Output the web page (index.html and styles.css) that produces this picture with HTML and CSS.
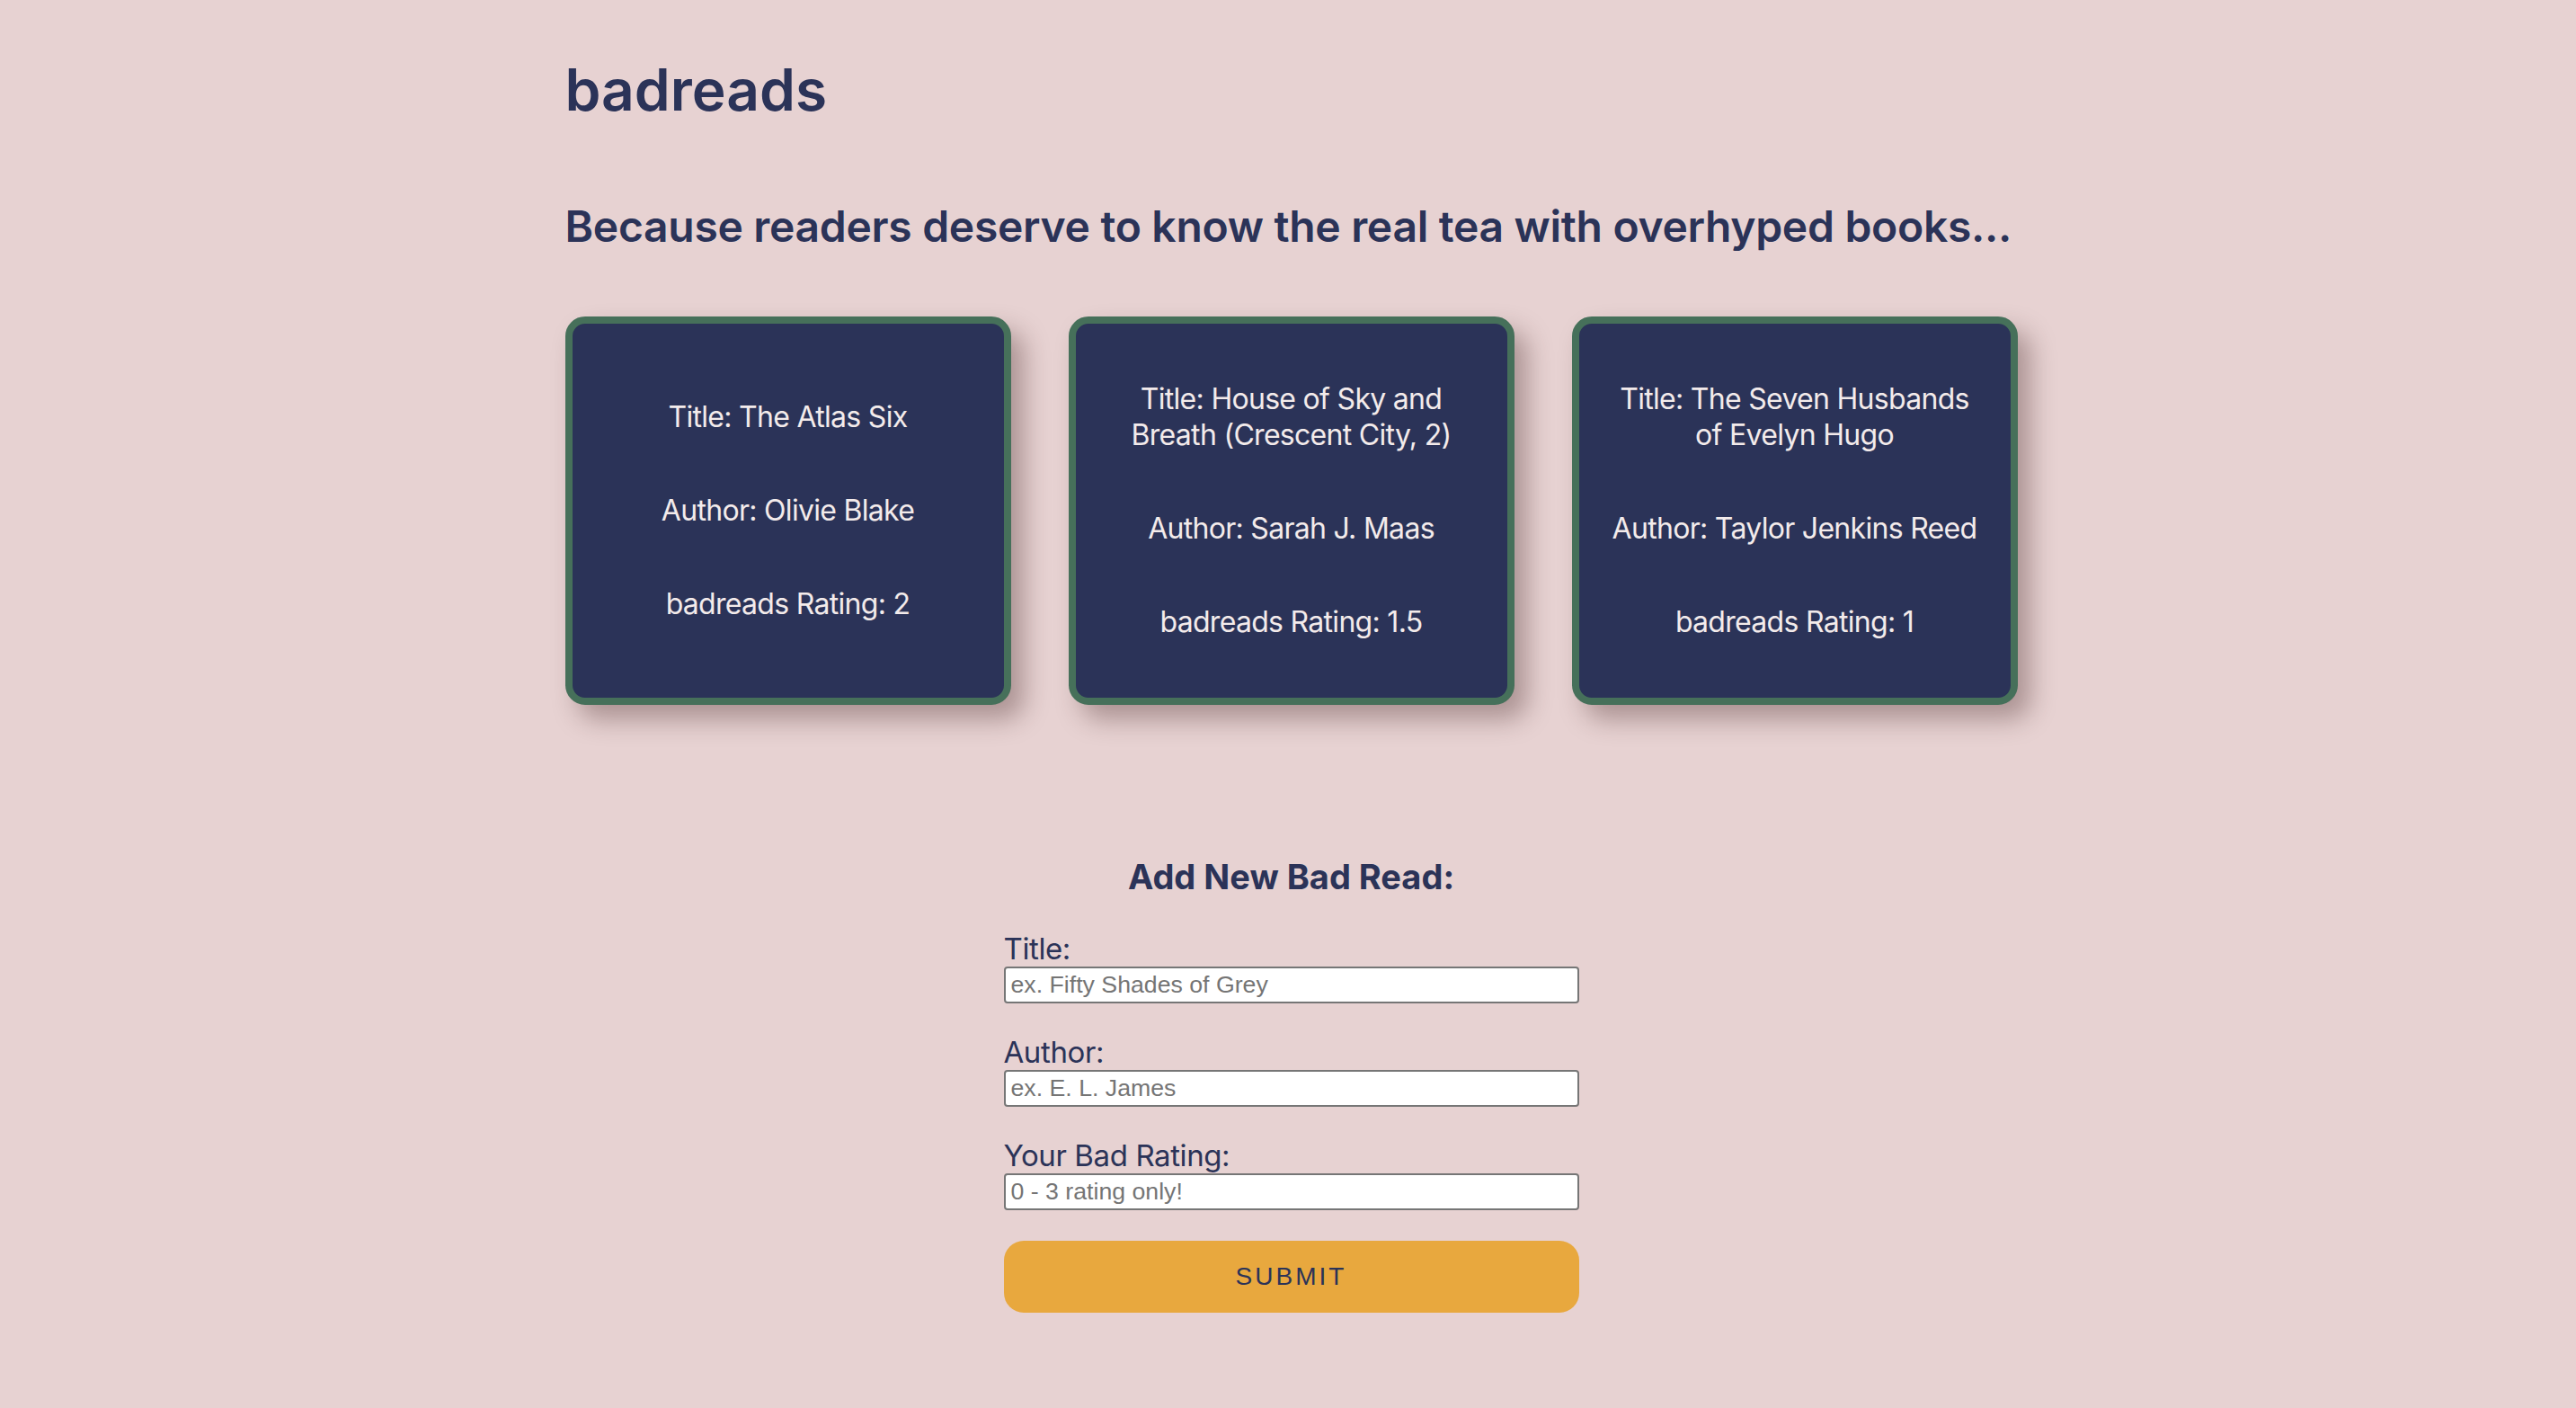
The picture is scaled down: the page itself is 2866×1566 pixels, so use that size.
FILE: index.html
```html
<!DOCTYPE html>
<html lang="en">
<head>
<meta charset="utf-8">
<title>badreads</title>
<link rel="stylesheet" href="styles.css">
</head>
<body>
<main class="page">
  <h1 class="brand">badreads</h1>
  <h2 class="tagline">Because readers deserve to know the real tea with overhyped books...</h2>
  <section class="cards">
    <article class="card">
      <p>Title: The Atlas Six</p>
      <p>Author: Olivie Blake</p>
      <p>badreads Rating: 2</p>
    </article>
    <article class="card">
      <p>Title: House of Sky and Breath (Crescent City, 2)</p>
      <p>Author: Sarah J. Maas</p>
      <p>badreads Rating: 1.5</p>
    </article>
    <article class="card">
      <p>Title: The Seven Husbands of Evelyn Hugo</p>
      <p>Author: Taylor Jenkins Reed</p>
      <p>badreads Rating: 1</p>
    </article>
  </section>
  <form class="add-form">
    <h3 class="form-title">Add New Bad Read:</h3>
    <label class="field"><span class="field-label">Title:</span><input class="field-input" type="text" placeholder="ex. Fifty Shades of Grey"></label>
    <label class="field"><span class="field-label">Author:</span><input class="field-input" type="text" placeholder="ex. E. L. James"></label>
    <label class="field"><span class="field-label">Your Bad Rating:</span><input class="field-input" type="text" placeholder="0 - 3 rating only!"></label>
    <button class="submit" type="button">Submit</button>
  </form>
</main>
</body>
</html>
```
FILE: styles.css
```css
* { box-sizing: border-box; }

body {
  margin: 0;
  background: #e7d2d2;
  color: #2b3358;
  font-family: Inter, "Noto Sans", sans-serif;
}

.page {
  width: 1623px;
  margin: 0 auto;
  padding: 61px 0 100px 7px;
}

.brand {
  margin: 0;
  font-size: 64px;
  line-height: 78px;
  font-weight: 600;
  letter-spacing: 0;
}

.tagline {
  margin: 84px 0 0;
  font-size: 48px;
  line-height: 58px;
  font-weight: 600;
  letter-spacing: -0.3px;
  white-space: nowrap;
}

.cards {
  margin-top: 71px;
  display: flex;
  gap: 64px;
}

.card {
  width: 496px;
  height: 432px;
  background: #2b3358;
  border: 8px solid #46705a;
  border-radius: 22px;
  box-shadow: 14px 16px 28px rgba(60, 30, 30, 0.35);
  padding: 0 30px;
  display: flex;
  flex-direction: column;
  justify-content: center;
  gap: 64px;
  text-align: center;
  color: #f3ebeb;
}

.card p {
  margin: 0;
  font-size: 32px;
  line-height: 40px;
  font-weight: 400;
  letter-spacing: -0.7px;
}

.add-form {
  width: 640px;
  margin: 168px auto 0;
  display: flex;
  flex-direction: column;
}

.form-title {
  margin: 0 0 37px;
  text-align: center;
  font-size: 38px;
  line-height: 46px;
  font-weight: 700;
}

.field {
  display: flex;
  flex-direction: column;
  margin-bottom: 34px;
}

.field-label {
  font-size: 33px;
  line-height: 40px;
  letter-spacing: -0.4px;
}

.field-input {
  width: 640px;
  height: 41px;
  margin: 0;
  border: 2px solid #767676;
  border-radius: 4px;
  padding: 0 6px;
  font-family: "Liberation Sans", Arial, sans-serif;
  font-size: 26.7px;
  background: #fff;
  color: #222;
}

.field-input::placeholder {
  color: #757575;
}

.submit {
  margin-top: 0;
  height: 80px;
  width: 640px;
  border: none;
  border-radius: 22px;
  background: #e8a83e;
  color: #2b3358;
  font-family: "Liberation Sans", Arial, sans-serif;
  font-size: 28px;
  letter-spacing: 3px;
  text-transform: uppercase;
}
```
